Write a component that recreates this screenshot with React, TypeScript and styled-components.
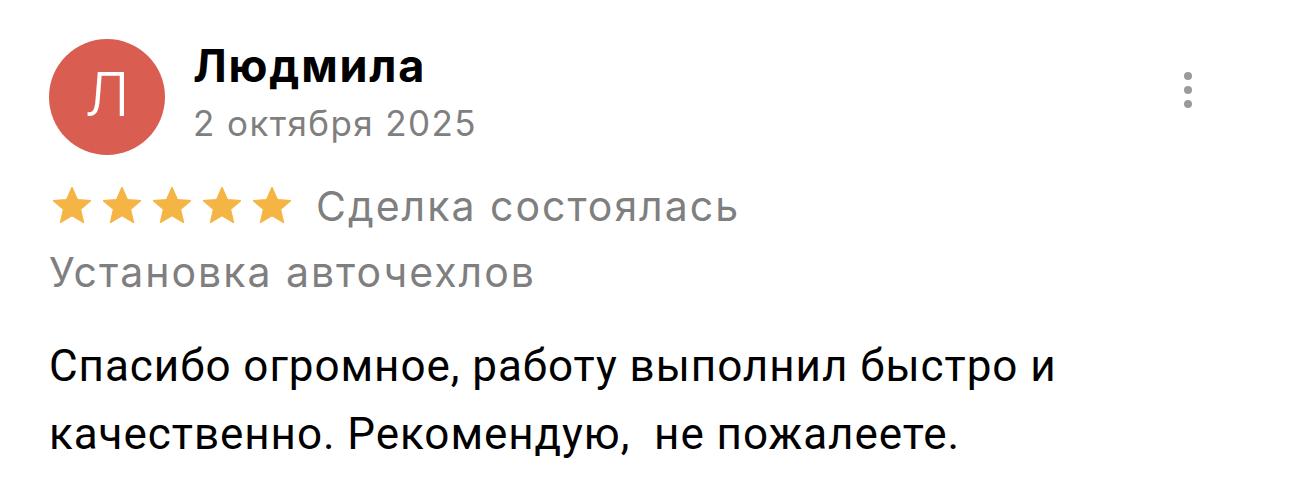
import React from "react";
import styled, { createGlobalStyle } from "styled-components";

const GlobalStyle = createGlobalStyle`
  html, body {
    margin: 0;
    padding: 0;
    background: #ffffff;
  }
  body {
    font-family: Inter, "Noto Sans", sans-serif;
    -webkit-font-smoothing: antialiased;
  }
`;

const Card = styled.div`
  width: 1290px;
  height: 501px;
  box-sizing: border-box;
  padding: 39px 98px 0 49px;
  background: #fff;
`;

const Header = styled.div`
  display: flex;
  align-items: flex-start;
  gap: 28px;
`;

const Avatar = styled.div<{ color: string }>`
  width: 116px;
  height: 116px;
  flex: none;
  border-radius: 50%;
  background: ${(p) => p.color};
  color: #fff;
  display: flex;
  align-items: center;
  justify-content: center;
  font-size: 60px;
  font-weight: 300;
  line-height: 1;
  padding-bottom: 6px;
  box-sizing: border-box;
`;

const Author = styled.div`
  flex: 1;
  display: flex;
  flex-direction: column;
  gap: 7px;
  margin-top: 2px;
`;

const Name = styled.div`
  font-size: 45px;
  font-weight: 700;
  color: #000;
  line-height: 50px;
  letter-spacing: 1.8px;
`;

const DateText = styled.div`
  font-size: 35px;
  color: #7f7f7f;
  line-height: 50px;
  letter-spacing: 1.4px;
`;

const MoreButton = styled.button`
  border: 0;
  background: none;
  padding: 0;
  display: flex;
  flex-direction: column;
  gap: 6px;
  margin-top: 33px;
  span {
    width: 8px;
    height: 8px;
    border-radius: 50%;
    background: #9b9b9b;
  }
`;

const RatingRow = styled.div`
  display: flex;
  align-items: flex-start;
  gap: 25px;
  margin-top: 25px;
`;

const Stars = styled.div`
  display: flex;
  gap: 12px;
  padding-left: 4px;
  margin-top: 7px;
`;

const Muted = styled.div`
  font-size: 41px;
  color: #7f7f7f;
  letter-spacing: 2px;
  line-height: 52px;
`;

const Service = styled(Muted)`
  margin-top: 14px;
`;

const Body = styled.p`
  margin: 34px 0 0;
  font-family: Roboto, "Noto Sans", sans-serif;
  font-size: 44px;
  line-height: 68px;
  color: #000;
  letter-spacing: 0.95px;
  white-space: pre-wrap;
`;

const Star = () => (
  <svg width="38" height="36" viewBox="1.2 0.8 21.6 20.4">
    <path
      d="M12 0.8l3.1 7.1 7.7 0.6-5.9 5 1.8 7.6L12 17.1l-6.7 4 1.8-7.6-5.9-5 7.7-0.6z"
      fill="#f4b545"
      stroke="#f4b545"
      strokeWidth="0.6"
      strokeLinejoin="round"
    />
  </svg>
);

export default function App() {
  return (
    <>
      <GlobalStyle />
      <Card>
        <Header>
          <Avatar color="#da5d52">Л</Avatar>
          <Author>
            <Name>Людмила</Name>
            <DateText>2 октября 2025</DateText>
          </Author>
          <MoreButton aria-label="Ещё">
            <span />
            <span />
            <span />
          </MoreButton>
        </Header>
        <RatingRow>
          <Stars>
            {[0, 1, 2, 3, 4].map((i) => (
              <Star key={i} />
            ))}
          </Stars>
          <Muted>Сделка состоялась</Muted>
        </RatingRow>
        <Service>Установка авточехлов</Service>
        <Body>
          {"Спасибо огромное, работу выполнил быстро и\nкачественно. Рекомендую,  не пожалеете."}
        </Body>
      </Card>
    </>
  );
}
